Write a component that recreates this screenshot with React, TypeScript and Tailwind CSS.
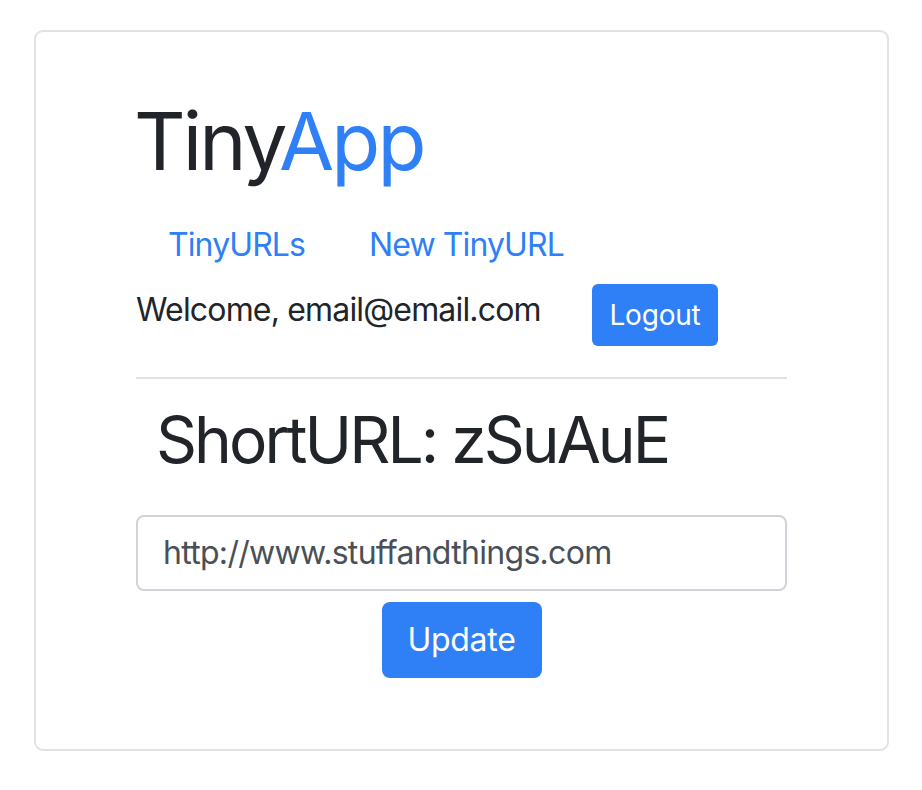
export default function App() {
  return (
    <div className="min-h-[790px] bg-white pl-[34px] pt-[30px]" style={{ fontFamily: "Inter, 'Noto Sans', sans-serif" }}>
      <div className="box-border h-[721px] w-[855px] rounded-[9px] border-2 border-[#dfe2e6] px-[100px] pt-[61px]">
        <h1 className="ml-[-2px] text-[80px] leading-[96px] font-normal text-[#212529] tracking-[-2.9px]">
          Tiny<span className="text-[#2f7ff6]">App</span>
        </h1>
        <ul className="mt-[16px] flex">
          <li>
            <a className="block px-[32px] py-[16px] text-[32px] leading-[48px] tracking-[-0.9px] text-[#2f7ff6]">TinyURLs</a>
          </li>
          <li>
            <a className="block px-[32px] py-[16px] text-[32px] leading-[48px] tracking-[-0.9px] text-[#2f7ff6]">New TinyURL</a>
          </li>
        </ul>
        <div className="flex items-start">
          <span className="w-[456px] pt-[1px] text-[32px] leading-[48px] tracking-[-0.83px] text-[#212529]">Welcome, email@email.com</span>
          <button className="mt-[-1px] h-[62px] w-[126px] rounded-[6px] bg-[#2f7ff6] text-[28px] leading-[42px] tracking-[-0.2px] text-white">Logout</button>
        </div>
        <hr className="mt-[31px] border-t-2 border-[#dfe2e6]" />
        <h2 className="mt-[22px] pl-[20px] text-[64px] leading-[77px] font-normal tracking-[-2.95px] text-[#212529]">ShortURL: zSuAuE</h2>
        <div className="mt-[37px] box-border h-[76px] w-full rounded-[8px] border-2 border-[#ced4da] px-[25px] py-[12px] text-[32px] leading-[48px] tracking-[-0.7px] text-[#495057]">
          http://www.stuffandthings.com
        </div>
        <div className="mt-[11px] flex justify-center">
          <button className="h-[76px] w-[160px] rounded-[8px] bg-[#2f7ff6] text-[32px] leading-[48px] tracking-[-0.3px] text-white">Update</button>
        </div>
      </div>
    </div>
  );
}
